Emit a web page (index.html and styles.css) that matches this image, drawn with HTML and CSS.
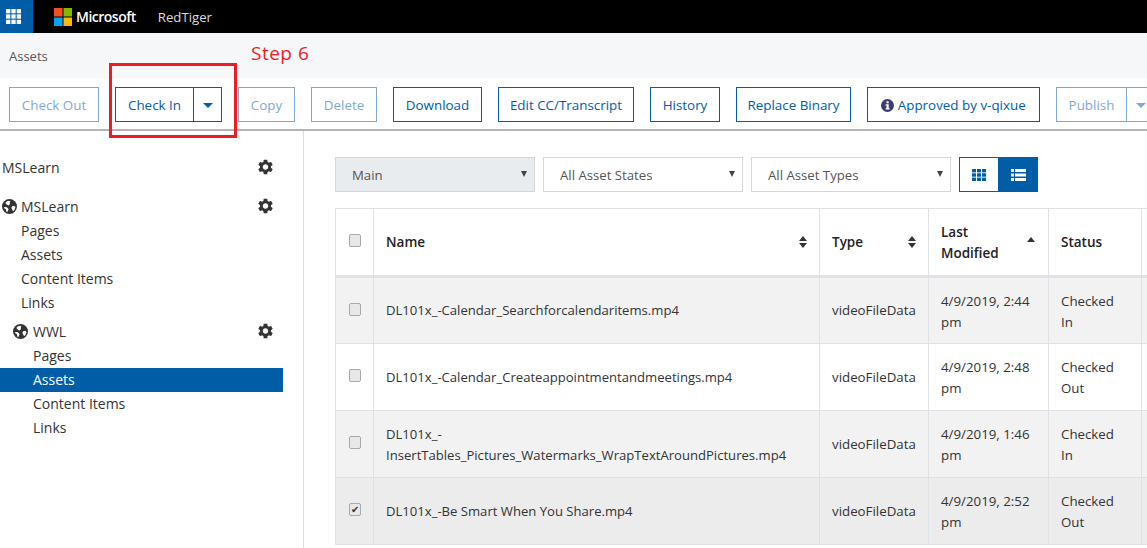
FILE: index.html
```html
<!DOCTYPE html>
<html lang="en">
<head>
  <meta charset="UTF-8">
  <title>Assets</title>
  <link rel="stylesheet" href="styles.css">
</head>
<body>

  <svg class="defs" width="0" height="0">
    <symbol id="gear" viewBox="2.5 1.5 19 21">
      <path fill-rule="evenodd" d="M19.14 12.94c.04-.3.06-.61.06-.94 0-.32-.02-.64-.07-.94l2.03-1.58a.49.49 0 0 0 .12-.61l-1.92-3.32a.488.488 0 0 0-.59-.22l-2.39.96c-.5-.38-1.03-.7-1.62-.94l-.36-2.54a.484.484 0 0 0-.48-.41h-3.84c-.24 0-.43.17-.47.41l-.36 2.54c-.59.24-1.13.57-1.62.94l-2.39-.96c-.22-.08-.47 0-.59.22L2.74 8.87c-.12.21-.08.47.12.61l2.03 1.58c-.05.3-.09.63-.09.94s.02.64.07.94l-2.03 1.58a.49.49 0 0 0-.12.61l1.92 3.32c.12.22.37.29.59.22l2.39-.96c.5.38 1.03.7 1.62.94l.36 2.54c.05.24.24.41.48.41h3.84c.24 0 .44-.17.47-.41l.36-2.54c.59-.24 1.13-.56 1.62-.94l2.39.96c.22.08.47 0 .59-.22l1.92-3.32c.12-.22.07-.47-.12-.61l-2.01-1.58zM12 15.6c-1.98 0-3.6-1.62-3.6-3.6s1.62-3.6 3.6-3.6 3.6 1.62 3.6 3.6-1.62 3.6-3.6 3.6z"/>
    </symbol>
    <symbol id="globe" viewBox="0 0 16 16">
      <circle cx="8" cy="8" r="8"/>
      <path fill="#fff" d="M5.4 2.4 7.6 1.8 9 2.8 8 4.2 8.6 5.4 7 6.8 5.4 6 4 5 3.8 3.6zM2.2 8.4 4.6 8.6 6.4 9.8 7 11.2 6.2 12.8 5.6 14.2 4.6 13.2 4.2 11 2.6 10zM10.8 7.6 13 7.2 14.4 8.6 13.4 11.4 11.8 13 11 11.4 10 9.6z"/>
    </symbol>
  </svg>

  <header class="topbar">
    <div class="waffle">
      <svg width="15" height="15" viewBox="0 0 14 14" fill="#fff">
        <rect width="4" height="4"/><rect x="5" width="4" height="4"/><rect x="10" width="4" height="4"/>
        <rect y="5" width="4" height="4"/><rect x="5" y="5" width="4" height="4"/><rect x="10" y="5" width="4" height="4"/>
        <rect y="10" width="4" height="4"/><rect x="5" y="10" width="4" height="4"/><rect x="10" y="10" width="4" height="4"/>
      </svg>
    </div>
    <svg class="ms-logo" width="18" height="18" viewBox="0 0 18 18">
      <rect width="8.5" height="8.5" fill="#f25022"/>
      <rect x="9.5" width="8.5" height="8.5" fill="#7fba00"/>
      <rect y="9.5" width="8.5" height="8.5" fill="#00a4ef"/>
      <rect x="9.5" y="9.5" width="8.5" height="8.5" fill="#ffb900"/>
    </svg>
    <span class="ms-name">Microsoft</span>
    <span class="app-name">RedTiger</span>
  </header>

  <div class="crumb">Assets</div>

  <div class="toolbar">
    <button class="btn off w-checkout">Check Out</button>
    <div class="split">
      <button class="btn w-checkin">Check In</button>
      <button class="btn caret-btn"><span class="caret"></span></button>
    </div>
    <button class="btn off w-copy">Copy</button>
    <button class="btn off w-delete">Delete</button>
    <button class="btn w-download">Download</button>
    <button class="btn w-edit">Edit CC/Transcript</button>
    <button class="btn w-history">History</button>
    <button class="btn w-replace">Replace Binary</button>
    <button class="btn w-approved">
      <svg class="info" width="13" height="13" viewBox="0 0 13 13">
        <circle cx="6.5" cy="6.5" r="6.5" fill="#3c3c6e"/>
        <rect x="5.5" y="2.3" width="2.2" height="2" fill="#fff"/>
        <path fill="#fff" d="M4.6 5.3h3.1v3.9h.9v1.2H4.6V9.2h.9V6.5h-.9z"/>
      </svg>
      Approved by v-qixue
    </button>
    <div class="split">
      <button class="btn off w-publish">Publish</button>
      <button class="btn off caret-btn"><span class="caret"></span></button>
    </div>
  </div>

  <div class="layout">
    <nav class="sidebar">
      <div class="nav-title">
        <span>MSLearn</span>
        <svg class="gear"><use href="#gear"/></svg>
      </div>

      <div class="nav-site">
        <svg class="globe"><use href="#globe"/></svg>
        <span>MSLearn</span>
        <svg class="gear"><use href="#gear"/></svg>
      </div>
      <a class="nav-link">Pages</a>
      <a class="nav-link">Assets</a>
      <a class="nav-link">Content Items</a>
      <a class="nav-link">Links</a>

      <div class="nav-site sub">
        <svg class="globe"><use href="#globe"/></svg>
        <span>WWL</span>
        <svg class="gear"><use href="#gear"/></svg>
      </div>
      <a class="nav-link sub">Pages</a>
      <a class="nav-link sub active">Assets</a>
      <a class="nav-link sub">Content Items</a>
      <a class="nav-link sub">Links</a>
    </nav>

    <main class="content">
      <div class="filters">
        <div class="select disabled">Main</div>
        <div class="select">All Asset States</div>
        <div class="select">All Asset Types</div>
        <div class="view-toggle">
          <button class="view-btn">
            <svg width="14" height="12" viewBox="0 0 14 12" fill="#005da6">
              <rect width="4" height="3.4"/><rect x="5" width="4" height="3.4"/><rect x="10" width="4" height="3.4"/>
              <rect y="4.3" width="4" height="3.4"/><rect x="5" y="4.3" width="4" height="3.4"/><rect x="10" y="4.3" width="4" height="3.4"/>
              <rect y="8.6" width="4" height="3.4"/><rect x="5" y="8.6" width="4" height="3.4"/><rect x="10" y="8.6" width="4" height="3.4"/>
            </svg>
          </button>
          <button class="view-btn on">
            <svg width="15" height="12" viewBox="0 0 15 12" fill="#fff">
              <rect width="3" height="3"/><rect x="4" width="11" height="3"/>
              <rect y="4.5" width="3" height="3"/><rect x="4" y="4.5" width="11" height="3"/>
              <rect y="9" width="3" height="3"/><rect x="4" y="9" width="11" height="3"/>
            </svg>
          </button>
        </div>
      </div>

      <table class="assets">
        <colgroup>
          <col class="c-check"><col class="c-name"><col class="c-type"><col class="c-date"><col class="c-status"><col class="c-rest">
        </colgroup>
        <thead>
          <tr>
            <th><span class="box"></span></th>
            <th><div class="th-in">Name<span class="sort"><i class="up"></i><i class="down"></i></span></div></th>
            <th><div class="th-in">Type<span class="sort"><i class="up"></i><i class="down"></i></span></div></th>
            <th class="two-line"><div class="th-in"><span>Last<br>Modified</span><span class="sort raised"><i class="up"></i></span></div></th>
            <th>Status</th>
            <th></th>
          </tr>
        </thead>
        <tbody>
          <tr>
            <td><span class="box"></span></td>
            <td class="name">DL101x_-Calendar_Searchforcalendaritems.mp4</td>
            <td>videoFileData</td>
            <td class="two-line">4/9/2019, 2:44 pm</td>
            <td class="two-line">Checked In</td>
            <td></td>
          </tr>
          <tr>
            <td><span class="box"></span></td>
            <td class="name">DL101x_-Calendar_Createappointmentandmeetings.mp4</td>
            <td>videoFileData</td>
            <td class="two-line">4/9/2019, 2:48 pm</td>
            <td class="two-line">Checked Out</td>
            <td></td>
          </tr>
          <tr>
            <td><span class="box"></span></td>
            <td class="name two-line">DL101x_-<br>InsertTables_Pictures_Watermarks_WrapTextAroundPictures.mp4</td>
            <td>videoFileData</td>
            <td class="two-line">4/9/2019, 1:46 pm</td>
            <td class="two-line">Checked In</td>
            <td></td>
          </tr>
          <tr class="picked">
            <td><span class="box checked">&#10004;</span></td>
            <td class="name">DL101x_-Be Smart When You Share.mp4</td>
            <td>videoFileData</td>
            <td class="two-line">4/9/2019, 2:52 pm</td>
            <td class="two-line">Checked Out</td>
            <td></td>
          </tr>
        </tbody>
      </table>
    </main>
  </div>

  <!-- annotation drawn over the screenshot -->
  <div class="mark-box"></div>
  <div class="mark-label">Step 6</div>

</body>
</html>
```

FILE: styles.css
```css
html, body {
  margin: 0;
  height: 548px;
  overflow: hidden;
}
body {
  position: relative;
  font-family: "Open Sans", "Noto Sans", Arial, sans-serif;
  font-size: 13.5px;
  color: #333;
  background-color: white;
}
.defs {
  position: absolute;
}

/* top bar */
.topbar {
  display: flex;
  align-items: center;
  height: 33px;
  background-color: black;
  color: white;
}
.waffle {
  display: flex;
  align-items: center;
  justify-content: center;
  width: 33px;
  height: 33px;
  background-color: #005da6;
}
.waffle svg {
  margin-left: -7px;
}
.ms-logo {
  margin-left: 21px;
}
.ms-name {
  margin-left: 4px;
  font-size: 14px;
  font-weight: 600;
  letter-spacing: -0.5px;
}
.app-name {
  margin-left: 22px;
  font-size: 13.2px;
  color: #ddd;
}
.crumb {
  height: 45px;
  line-height: 47px;
  padding-left: 9px;
  font-size: 13px;
  color: #555;
  background-color: #f6f7f9;
  box-sizing: border-box;
}

/* toolbar */
.toolbar {
  display: flex;
  gap: 16px;
  height: 53px;
  padding: 9px 0 0 9px;
  box-sizing: border-box;
  border-bottom: 2px solid #b5b5b5;
  white-space: nowrap;
}
.btn {
  flex: none;
  height: 35px;
  padding: 0;
  font-family: inherit;
  font-size: 13.4px;
  color: #005da6;
  background-color: white;
  border: 1px solid #005da6;
}
.btn.off {
  color: #7eaad2;
  border-color: #7eaad2;
}
.split {
  display: flex;
  flex: none;
}
.caret-btn {
  width: 29px;
  margin-left: -1px;
}
.caret {
  display: inline-block;
  margin-bottom: 2px;
  border-left: 5px solid transparent;
  border-right: 5px solid transparent;
  border-top: 5px solid #005da6;
}
.off .caret {
  border-top-color: #7eaad2;
}
.w-checkout { width: 90px; }
.w-checkin { width: 79px; }
.w-copy { width: 57px; }
.w-delete { width: 66px; }
.w-download { width: 89px; }
.w-edit { width: 136px; }
.w-history { width: 70px; }
.w-replace { width: 115px; }
.w-approved { width: 173px; }
.w-publish { width: 71px; }
.info {
  vertical-align: -2px;
}

/* page layout */
.layout {
  display: flex;
  height: 418px;
}
.sidebar {
  flex: none;
  width: 283px;
  padding-top: 24px;
  padding-right: 20px;
  border-right: 1px solid #ddd;
}
.nav-title, .nav-site {
  display: flex;
  align-items: center;
  height: 24px;
  padding-left: 2px;
  padding-right: 10px;
  font-size: 14px;
  color: #333;
}
.nav-title {
  margin-bottom: 15px;
}
.nav-site {
  margin-bottom: 1px;
}
.nav-site .globe {
  flex: none;
  width: 15px;
  height: 15px;
  margin-right: 4px;
  fill: #333;
}
.nav-site.sub {
  margin-top: 4px;
  padding-left: 13px;
}
.nav-site.sub .globe {
  margin-right: 5px;
}
.gear {
  flex: none;
  width: 15px;
  height: 16px;
  margin-left: auto;
  fill: #333;
}
.nav-link {
  display: block;
  height: 24px;
  line-height: 24px;
  padding-left: 21px;
  font-size: 14px;
  color: #333;
}
.nav-link.sub {
  padding-left: 33px;
}
.nav-link.active {
  color: white;
  background-color: #005da6;
}

/* filters */
.content {
  flex: none;
  width: 843px;
  padding: 26px 0 0 31px;
}
.filters {
  display: flex;
  gap: 8px;
  height: 35px;
  margin-bottom: 16px;
}
.select {
  position: relative;
  width: 200px;
  height: 35px;
  line-height: 35px;
  padding-left: 16px;
  box-sizing: border-box;
  font-size: 13.2px;
  color: #555;
  border: 1px solid #d3d6da;
}
.select::after {
  content: "";
  position: absolute;
  right: 7px;
  top: 13px;
  border-left: 3px solid transparent;
  border-right: 3px solid transparent;
  border-top: 6px solid #444;
}
.select.disabled {
  background-color: #e9ecef;
}
.view-toggle {
  display: flex;
}
.view-btn {
  display: flex;
  align-items: center;
  justify-content: center;
  width: 40px;
  height: 35px;
  padding: 0;
  background-color: white;
  border: 1px solid #005da6;
}
.view-btn.on {
  width: 39px;
  background-color: #005da6;
}

/* table */
.assets {
  table-layout: fixed;
  width: 834px;
  border-collapse: collapse;
}
.c-check { width: 38px; }
.c-name { width: 446px; }
.c-type { width: 109px; }
.c-date { width: 120px; }
.c-status { width: 93px; }
.assets th, .assets td {
  box-sizing: border-box;
  padding: 0 12px;
  border: 1px solid #dee2e6;
  text-align: left;
  line-height: 21px;
  font-size: 13.5px;
}
.assets th {
  height: 68px;
  font-weight: 600;
  color: #222;
  border-bottom: 3px solid #dee2e6;
}
.assets td {
  height: 67px;
  font-size: 13.3px;
  color: #333;
}
.assets td.name {
  font-size: 13.1px;
}
.assets th.two-line, .assets td.two-line {
  padding-top: 2px;
}
.assets th:first-child, .assets td:first-child {
  padding: 0 0 0 13px;
}
.assets tbody tr:nth-child(odd) {
  background-color: #f2f2f2;
}
.assets tbody tr.picked {
  background-color: #ececec;
}
.th-in {
  display: flex;
  align-items: center;
  justify-content: space-between;
}
.sort {
  display: flex;
  flex-direction: column;
  gap: 2px;
}
.sort.raised {
  margin-bottom: 8px;
  margin-right: 1px;
}
.sort i {
  display: block;
  border-left: 4px solid transparent;
  border-right: 4px solid transparent;
}
.sort .up {
  border-bottom: 5px solid #333;
}
.sort .down {
  border-top: 5px solid #333;
}
.box {
  display: block;
  width: 10px;
  height: 11px;
  margin-bottom: 3px;
  line-height: 11px;
  font-size: 10px;
  text-align: center;
  color: #333;
  background-color: #e8e8e8;
  border: 1px solid #a9a9a9;
  border-radius: 2px;
}

/* red annotation */
.mark-box {
  position: absolute;
  left: 109px;
  top: 63px;
  width: 122px;
  height: 69px;
  border: 3px solid #ed1c24;
}
.mark-label {
  position: absolute;
  left: 251px;
  top: 40px;
  font-size: 19px;
  letter-spacing: 0.5px;
  color: #ed1c24;
}
```
